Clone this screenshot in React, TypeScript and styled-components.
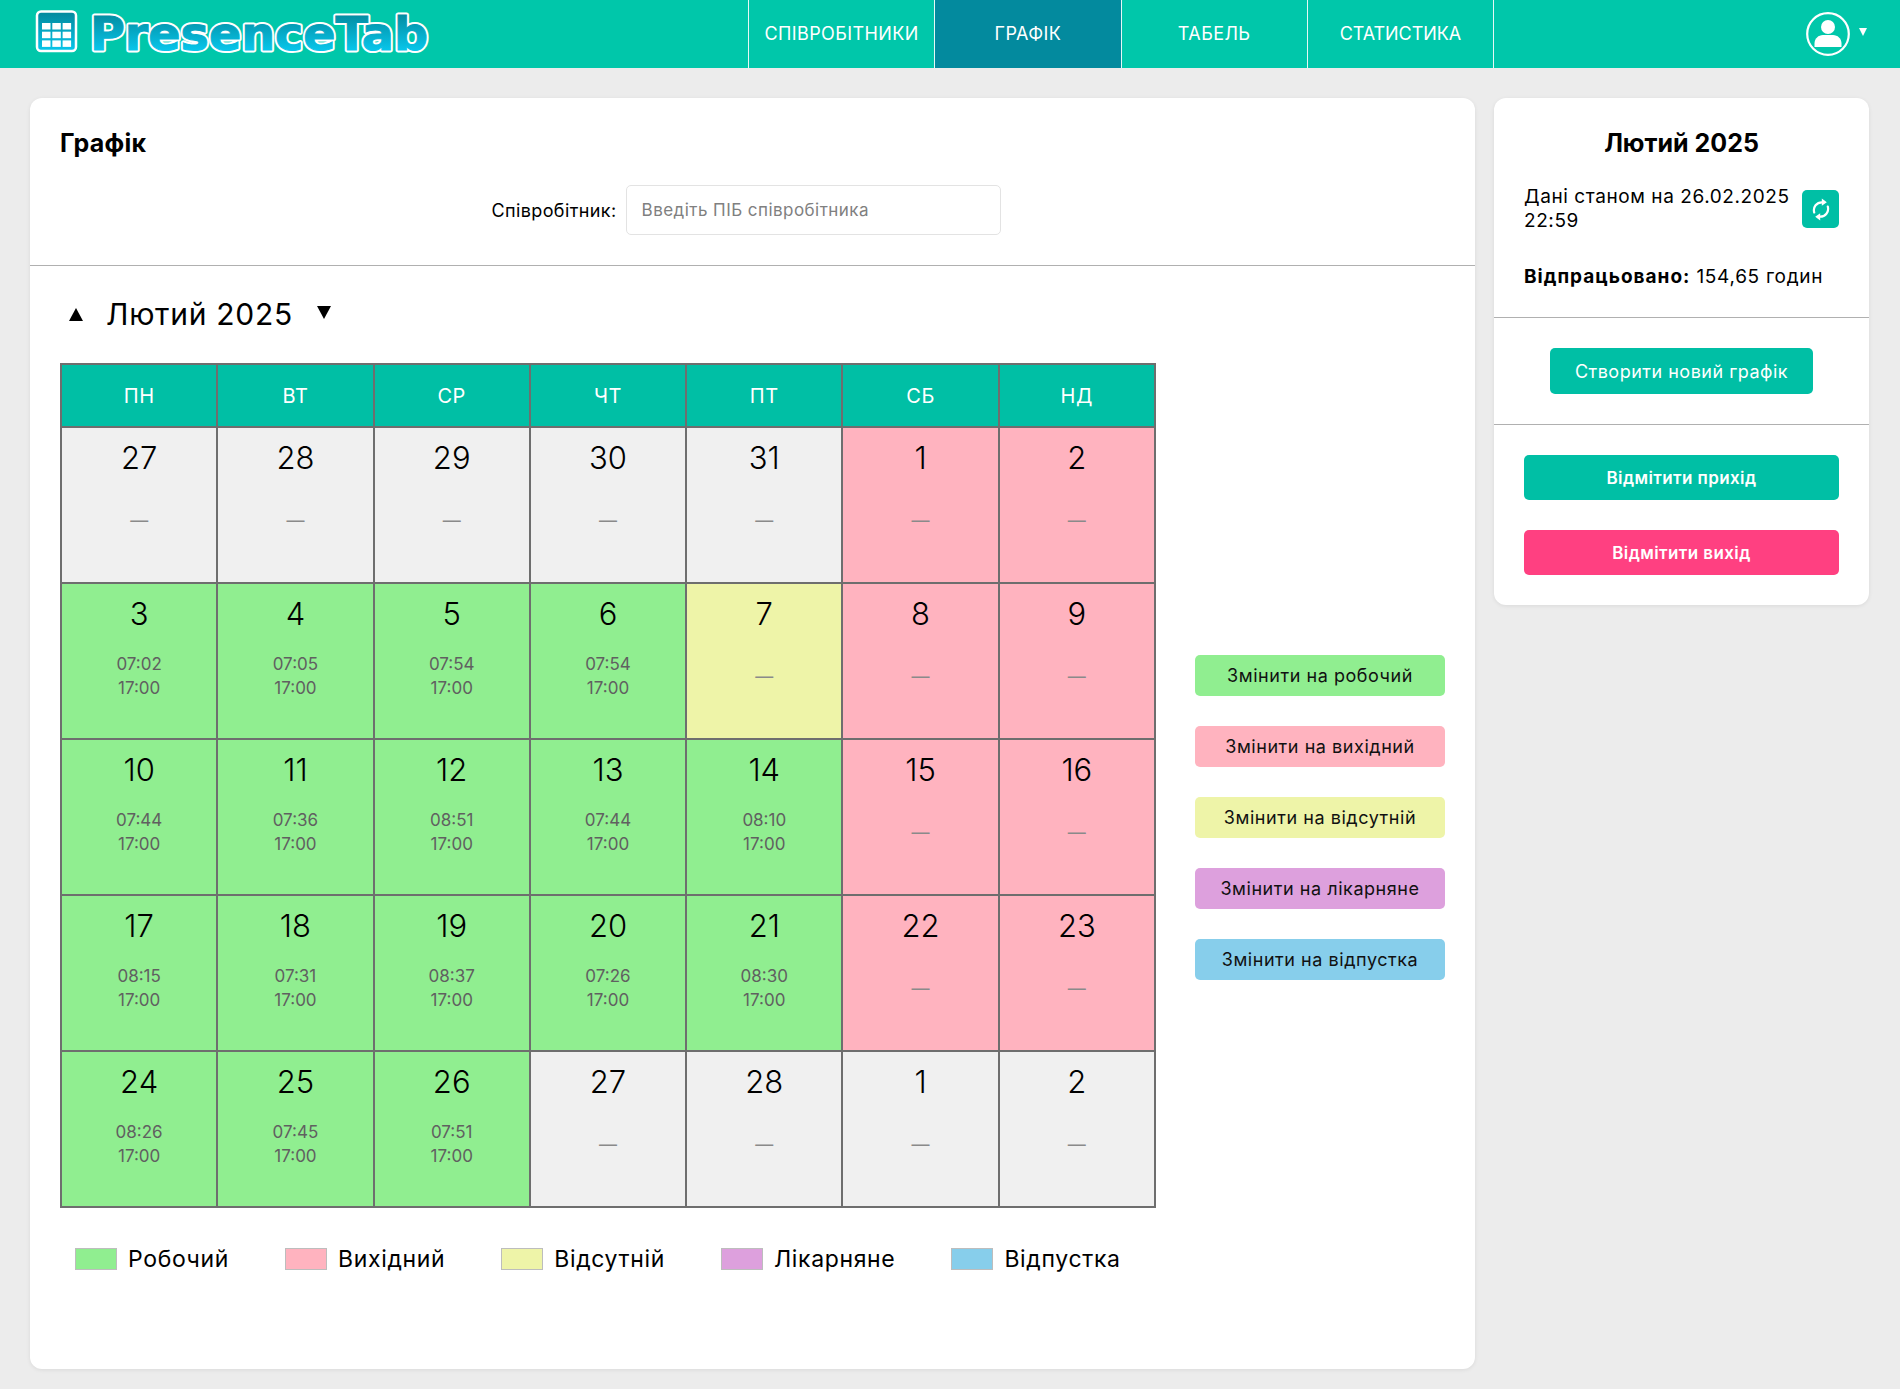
import React from 'react';
import styled, { createGlobalStyle } from 'styled-components';

const FONT = `Inter, "Noto Sans", "Liberation Sans", sans-serif`;

const Global = createGlobalStyle`
  html, body { margin: 0; padding: 0; background: #ececec; font-family: ${FONT}; color: #000; }
  * { box-sizing: border-box; }
`;

const Page = styled.div`
  width: 1900px;
  height: 1389px;
  display: flex;
  flex-direction: column;
  overflow: hidden;
`;

const Header = styled.header`
  height: 68px;
  flex: none;
  background: #00c7aa;
  display: flex;
  align-items: stretch;
  padding-left: 35px;
`;

const LogoBox = styled.div`
  width: 713px;
  display: flex;
  align-items: center;
`;

const Nav = styled.nav`
  display: flex;
  border-left: 1px solid #e6f8f5;
`;

const NavItem = styled.a<{ $active?: boolean; $tight?: boolean }>`
  width: 186.25px;
  display: flex;
  align-items: center;
  justify-content: center;
  padding-bottom: 2px;
  border-right: 1px solid #e6f8f5;
  font-size: 18px;
  color: #fff;
  letter-spacing: ${(p) => (p.$tight ? '-0.08px' : '0.4px')};
  background: ${(p) => (p.$active ? '#038a9e' : 'transparent')};
`;

const UserMenu = styled.div`
  margin-left: auto;
  margin-right: 16px;
  width: 90px;
  display: flex;
  align-items: center;
  gap: 9px;
  padding-left: 12px;
`;

const Caret = styled.span`
  width: 0;
  height: 0;
  border-left: 4.5px solid transparent;
  border-right: 4.5px solid transparent;
  border-top: 8px solid #fff;
  margin-bottom: 5px;
`;

const Body = styled.div`
  flex: 1;
  display: flex;
  align-items: flex-start;
  gap: 19px;
  padding: 30px 31px 20px 30px;
`;

const Card = styled.section`
  background: #fff;
  border-radius: 12px;
  box-shadow: 0 1px 4px rgba(0, 0, 0, 0.08);
`;

const MainCard = styled(Card)`
  width: 1445px;
  height: 1271px;
`;

const TopArea = styled.div`
  height: 168px;
  padding: 30px 30px 0;
  border-bottom: 1px solid #b0b0b0;
`;

const PageTitle = styled.h1`
  margin: 0;
  font-size: 25px;
  line-height: 30px;
  font-weight: 700;
  letter-spacing: 0.3px;
`;

const SearchRow = styled.div`
  margin-top: 27px;
  display: flex;
  align-items: center;
  justify-content: center;
  gap: 9px;
  padding-right: 13px;
`;

const SearchLabel = styled.label`
  font-size: 18px;
  letter-spacing: 0.4px;
`;

const SearchInput = styled.input`
  width: 375px;
  height: 50px;
  border: 1px solid #e3e3e3;
  border-radius: 5px;
  padding: 0 15px;
  font-family: ${FONT};
  font-size: 17px;
  letter-spacing: 0.45px;
  &::placeholder { color: #808080; opacity: 1; }
`;

const Content = styled.div`
  padding: 27px 30px 0;
`;

const MonthRow = styled.div`
  display: flex;
  align-items: center;
  height: 42px;
`;

const Triangle = styled.span<{ $down?: boolean }>`
  width: 0;
  height: 0;
  border-left: 7px solid transparent;
  border-right: 7px solid transparent;
  ${(p) => (p.$down ? 'border-top: 13px solid #000;' : 'border-bottom: 13px solid #000;')}
`;

const UpArrow = styled(Triangle)`
  margin-left: 9px;
  margin-right: 23px;
`;

const DownArrow = styled(Triangle)`
  margin-left: 24px;
  margin-bottom: 3px;
`;

const MonthTitle = styled.h2`
  margin: 0;
  font-size: 30px;
  font-weight: 400;
  letter-spacing: 0.7px;
`;

const CalendarRow = styled.div`
  margin-top: 28px;
  display: flex;
  align-items: flex-start;
`;

const Table = styled.table`
  width: 1096px;
  table-layout: fixed;
  border-collapse: collapse;
  border: 2px solid #6e6e6e;
`;

const HeadCell = styled.th`
  height: 63px;
  background: #00bfa5;
  border: 2px solid #6e6e6e;
  color: #fff;
  font-weight: 400;
  font-size: 20px;
  letter-spacing: 0.6px;
  padding: 0;
`;

const colours: Record<string, string> = {
  work: '#90ee90',
  off: '#ffb3bf',
  away: '#eef4a8',
  sick: '#dda0dd',
  vac: '#87ceeb',
  other: '#f0f0f0',
};

const DayCell = styled.td<{ $kind: string }>`
  height: 156px;
  padding: 0;
  border: 2px solid #6e6e6e;
  background: ${(p) => colours[p.$kind]};
  text-align: center;
  vertical-align: top;
`;

const DayNumber = styled.div`
  margin-top: 11px;
  font-size: 31px;
  font-weight: 300;
  line-height: 38px;
`;

const TimeBlock = styled.div`
  margin-top: 19px;
  font-size: 17px;
  line-height: 24px;
  color: #606060;
`;

const Dash = styled.div`
  margin-top: 32px;
  font-size: 18px;
  line-height: 24px;
  color: #8a8a8a;
`;

const ActionStack = styled.div`
  margin: 292px 0 0 39px;
  display: flex;
  flex-direction: column;
  gap: 30px;
`;

const ActionButton = styled.button<{ $kind: string }>`
  width: 250px;
  height: 41px;
  border: 0;
  border-radius: 5px;
  background: ${(p) => colours[p.$kind]};
  font-family: ${FONT};
  font-size: 18px;
  letter-spacing: 0.55px;
  color: #111;
  padding: 0;
`;

const Legend = styled.div`
  margin-top: 37px;
  padding-left: 15px;
  display: flex;
  align-items: center;
  gap: 56px;
`;

const LegendItem = styled.div`
  display: flex;
  align-items: center;
  gap: 11px;
  font-size: 23px;
  letter-spacing: 0.65px;
`;

const Swatch = styled.span<{ $kind: string }>`
  width: 42px;
  height: 22px;
  border: 1px solid #bdbdbd;
  background: ${(p) => colours[p.$kind]};
`;

const SideCard = styled(Card)`
  width: 375px;
  height: 507px;
`;

const SideSection = styled.div`
  padding: 30px;
  & + & { border-top: 1px solid #b0b0b0; }
`;

const SummarySection = styled(SideSection)`
  height: 219px;
  padding-bottom: 0;
`;

const SideTitle = styled.h2`
  margin: 0;
  text-align: center;
  font-size: 25px;
  line-height: 30px;
  font-weight: 700;
  letter-spacing: 0;
`;

const AsOfRow = styled.div`
  margin-top: 27px;
  display: flex;
  align-items: center;
  justify-content: space-between;
`;

const AsOfText = styled.div`
  width: 275px;
  font-size: 19px;
  line-height: 24px;
  letter-spacing: 0.58px;
`;

const RefreshButton = styled.button`
  width: 37px;
  height: 38px;
  border: 0;
  border-radius: 5px;
  background: #00bfa5;
  display: flex;
  align-items: center;
  justify-content: center;
  padding: 0;
`;

const Worked = styled.div`
  margin-top: 32px;
  font-size: 19px;
  line-height: 24px;
  letter-spacing: 0.7px;
  b { font-weight: 700; letter-spacing: 1px; }
`;

const CreateSection = styled(SideSection)`
  display: flex;
  justify-content: center;
`;

const CreateButton = styled.button`
  width: 263px;
  height: 46px;
  border: 0;
  border-radius: 5px;
  background: #00bfa5;
  color: #fff;
  font-family: ${FONT};
  font-size: 18px;
  letter-spacing: 0.5px;
  padding: 0;
`;

const MarkSection = styled(SideSection)`
  display: flex;
  flex-direction: column;
  gap: 30px;
`;

const MarkButton = styled.button<{ $pink?: boolean }>`
  width: 100%;
  height: 45px;
  border: 0;
  border-radius: 5px;
  background: ${(p) => (p.$pink ? '#ff4081' : '#00bfa5')};
  color: #fff;
  font-family: ${FONT};
  font-weight: 600;
  font-size: 17px;
  letter-spacing: 0.4px;
  padding: 0;
`;

const Logo = () => (
  <svg width="400" height="48" viewBox="0 0 400 48" role="img" aria-label="PresenceTab">
    <defs>
      <linearGradient id="lg" gradientUnits="userSpaceOnUse" x1="0" y1="3" x2="0" y2="42">
        <stop offset="0" stopColor="#038a9e" />
        <stop offset="1" stopColor="#08c8ee" />
      </linearGradient>
      <text
        id="word"
        x="55"
        y="40"
        fontFamily="'DejaVu Sans', sans-serif"
        fontWeight="700"
        fontSize="47"
        textLength="338"
        lengthAdjust="spacingAndGlyphs"
      >
        PresenceTab
      </text>
    </defs>
    <rect x="2" y="1.5" width="39" height="39.5" rx="4" fill="url(#lg)" stroke="#fff" strokeWidth="2.5" />
    {[0, 1, 2].map((r) =>
      [0, 1, 2].map((c) => (
        <rect key={`${r}${c}`} x={7 + c * 10.3} y={13 + r * 8.7} width="8.5" height="6.5" fill="#fff" />
      )),
    )}
    <use href="#word" fill="#fff" stroke="#fff" strokeWidth="5" strokeLinejoin="round" />
    <use href="#word" fill="url(#lg)" stroke="url(#lg)" strokeWidth="1" />
  </svg>
);

const UserIcon = () => (
  <svg width="44" height="44" viewBox="0 0 44 44" fill="none">
    <circle cx="22" cy="22" r="20.8" stroke="#fff" strokeWidth="2.2" />
    <circle cx="22" cy="15" r="7" fill="#fff" />
    <path d="M8.5 35v-3.5c0-5 4-8.5 8.5-8.5h10c4.5 0 8.5 3.5 8.5 8.5V35z" fill="#fff" />
  </svg>
);

const RefreshIcon = () => (
  <svg width="18" height="23" viewBox="0 0 18 23" fill="none" stroke="#fff" strokeWidth="2.2" strokeLinecap="round">
    <path d="M2.2 14.500C.8 9 4.500 4 10.500 4.300" />
    <path d="M15.800 8.500C17.200 14 13.500 19 7.500 18.700" />
    <path d="M9.800 .4l5 3.800-5 3.600z" fill="#fff" stroke="none" />
    <path d="M8.200 22.600l-5-3.800 5-3.600z" fill="#fff" stroke="none" />
  </svg>
);

type Day = { n: number; kind: string; t?: string };

const w = (n: number, t: string): Day => ({ n, kind: 'work', t });
const o = (n: number, kind = 'other'): Day => ({ n, kind });

const weeks: Day[][] = [
  [o(27), o(28), o(29), o(30), o(31), o(1, 'off'), o(2, 'off')],
  [w(3, '07:02'), w(4, '07:05'), w(5, '07:54'), w(6, '07:54'), o(7, 'away'), o(8, 'off'), o(9, 'off')],
  [w(10, '07:44'), w(11, '07:36'), w(12, '08:51'), w(13, '07:44'), w(14, '08:10'), o(15, 'off'), o(16, 'off')],
  [w(17, '08:15'), w(18, '07:31'), w(19, '08:37'), w(20, '07:26'), w(21, '08:30'), o(22, 'off'), o(23, 'off')],
  [w(24, '08:26'), w(25, '07:45'), w(26, '07:51'), o(27), o(28), o(1), o(2)],
];

const heads = ['ПН', 'ВТ', 'СР', 'ЧТ', 'ПТ', 'СБ', 'НД'];

const actions = [
  ['work', 'Змінити на робочий'],
  ['off', 'Змінити на вихідний'],
  ['away', 'Змінити на відсутній'],
  ['sick', 'Змінити на лікарняне'],
  ['vac', 'Змінити на відпустка'],
];

const legend = [
  ['work', 'Робочий'],
  ['off', 'Вихідний'],
  ['away', 'Відсутній'],
  ['sick', 'Лікарняне'],
  ['vac', 'Відпустка'],
];

export default function App() {
  return (
    <Page>
      <Global />
      <Header>
        <LogoBox>
          <Logo />
        </LogoBox>
        <Nav>
          <NavItem>СПІВРОБІТНИКИ</NavItem>
          <NavItem $active>ГРАФІК</NavItem>
          <NavItem>ТАБЕЛЬ</NavItem>
          <NavItem $tight>СТАТИСТИКА</NavItem>
        </Nav>
        <UserMenu>
          <UserIcon />
          <Caret />
        </UserMenu>
      </Header>
      <Body>
        <MainCard>
          <TopArea>
            <PageTitle>Графік</PageTitle>
            <SearchRow>
              <SearchLabel>Співробітник:</SearchLabel>
              <SearchInput placeholder="Введіть ПІБ співробітника" />
            </SearchRow>
          </TopArea>
          <Content>
            <MonthRow>
              <UpArrow />
              <MonthTitle>Лютий 2025</MonthTitle>
              <DownArrow $down />
            </MonthRow>
            <CalendarRow>
              <Table>
                <thead>
                  <tr>
                    {heads.map((h) => (
                      <HeadCell key={h}>{h}</HeadCell>
                    ))}
                  </tr>
                </thead>
                <tbody>
                  {weeks.map((week, i) => (
                    <tr key={i}>
                      {week.map((d, j) => (
                        <DayCell key={j} $kind={d.kind}>
                          <DayNumber>{d.n}</DayNumber>
                          {d.t ? (
                            <TimeBlock>
                              {d.t}
                              <br />
                              17:00
                            </TimeBlock>
                          ) : (
                            <Dash>—</Dash>
                          )}
                        </DayCell>
                      ))}
                    </tr>
                  ))}
                </tbody>
              </Table>
              <ActionStack>
                {actions.map(([k, label]) => (
                  <ActionButton key={k} $kind={k}>
                    {label}
                  </ActionButton>
                ))}
              </ActionStack>
            </CalendarRow>
            <Legend>
              {legend.map(([k, label]) => (
                <LegendItem key={k}>
                  <Swatch $kind={k} />
                  {label}
                </LegendItem>
              ))}
            </Legend>
          </Content>
        </MainCard>
        <SideCard>
          <SummarySection>
            <SideTitle>Лютий 2025</SideTitle>
            <AsOfRow>
              <AsOfText>Дані станом на 26.02.2025 22:59</AsOfText>
              <RefreshButton>
                <RefreshIcon />
              </RefreshButton>
            </AsOfRow>
            <Worked>
              <b>Відпрацьовано:</b> 154,65 годин
            </Worked>
          </SummarySection>
          <CreateSection>
            <CreateButton>Створити новий графік</CreateButton>
          </CreateSection>
          <MarkSection>
            <MarkButton>Відмітити прихід</MarkButton>
            <MarkButton $pink>Відмітити вихід</MarkButton>
          </MarkSection>
        </SideCard>
      </Body>
    </Page>
  );
}
